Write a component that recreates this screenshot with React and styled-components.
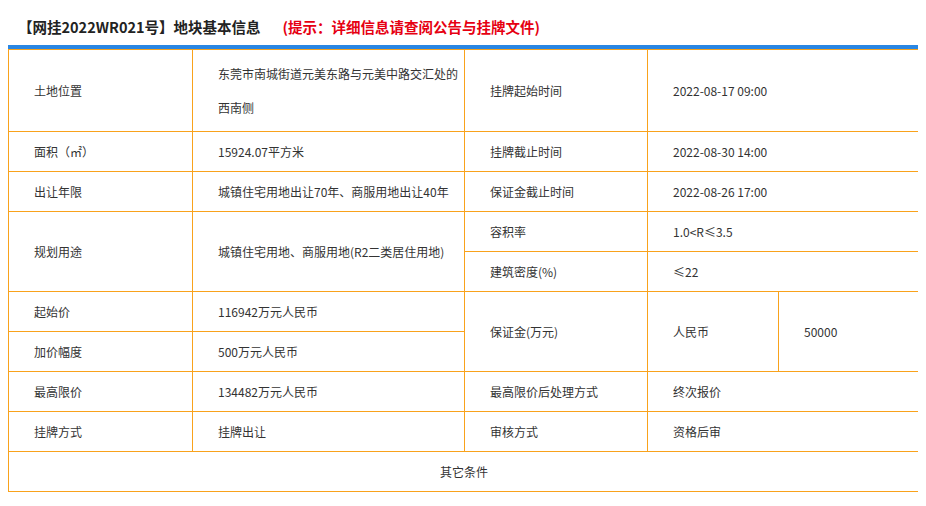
import React from "react";
import styled, { createGlobalStyle } from "styled-components";

const Global = createGlobalStyle`
  body { margin: 8px; font-family: "Microsoft YaHei", "Noto Sans CJK SC", sans-serif; color: #333; background: #fff; }
`;
const Title = styled.div`
  height: 37px; display: flex; align-items: center; padding-left: 10px;
  font-size: 14.5px; font-weight: bold; color: #222;
`;
const Hint = styled.span`color: #e60012; margin-left: 22px;`;
const Wrap = styled.div`border-top: 4px solid #2b87e3; width: 911px;`;
const Col = styled.col`width: ${(p) => p.$w}px;`;
const Table = styled.table`
  width: 911px; border-collapse: collapse; table-layout: fixed; font-size: 12px;
  td { border: 1px solid #f9a21b; padding: 0 0 0 25px; height: 40px; line-height: 16px;
       vertical-align: middle; white-space: nowrap; box-sizing: border-box; }
`;
const Multi = styled.td`&& { line-height: 34px; height: 82px; }`;
const Center = styled.td`&& { text-align: center; padding: 0; }`;

export default function App() {
  return (
    <>
      <Global />
      <Title>【网挂2022WR021号】地块基本信息<Hint>(提示：详细信息请查阅公告与挂牌文件)</Hint></Title>
      <Wrap>
        <Table>
          <colgroup>
            <Col $w={184} /><Col $w={272} /><Col $w={183} /><Col $w={131} /><Col $w={141} />
          </colgroup>
          <tbody>
            <tr><td>土地位置</td><Multi>东莞市南城街道元美东路与元美中路交汇处的<br />西南侧</Multi><td>挂牌起始时间</td><td colSpan={2}>2022-08-17 09:00</td></tr>
            <tr><td>面积（㎡）</td><td>15924.07平方米</td><td>挂牌截止时间</td><td colSpan={2}>2022-08-30 14:00</td></tr>
            <tr><td>出让年限</td><td>城镇住宅用地出让70年、商服用地出让40年</td><td>保证金截止时间</td><td colSpan={2}>2022-08-26 17:00</td></tr>
            <tr><td rowSpan={2}>规划用途</td><td rowSpan={2}>城镇住宅用地、商服用地(R2二类居住用地)</td><td>容积率</td><td colSpan={2}>1.0&lt;R≤3.5</td></tr>
            <tr><td>建筑密度(%)</td><td colSpan={2}>≤22</td></tr>
            <tr><td>起始价</td><td>116942万元人民币</td><td rowSpan={2}>保证金(万元)</td><td rowSpan={2}>人民币</td><td rowSpan={2}>50000</td></tr>
            <tr><td>加价幅度</td><td>500万元人民币</td></tr>
            <tr><td>最高限价</td><td>134482万元人民币</td><td>最高限价后处理方式</td><td colSpan={2}>终次报价</td></tr>
            <tr><td>挂牌方式</td><td>挂牌出让</td><td>审核方式</td><td colSpan={2}>资格后审</td></tr>
            <tr><Center colSpan={5}>其它条件</Center></tr>
          </tbody>
        </Table>
      </Wrap>
    </>
  );
}
